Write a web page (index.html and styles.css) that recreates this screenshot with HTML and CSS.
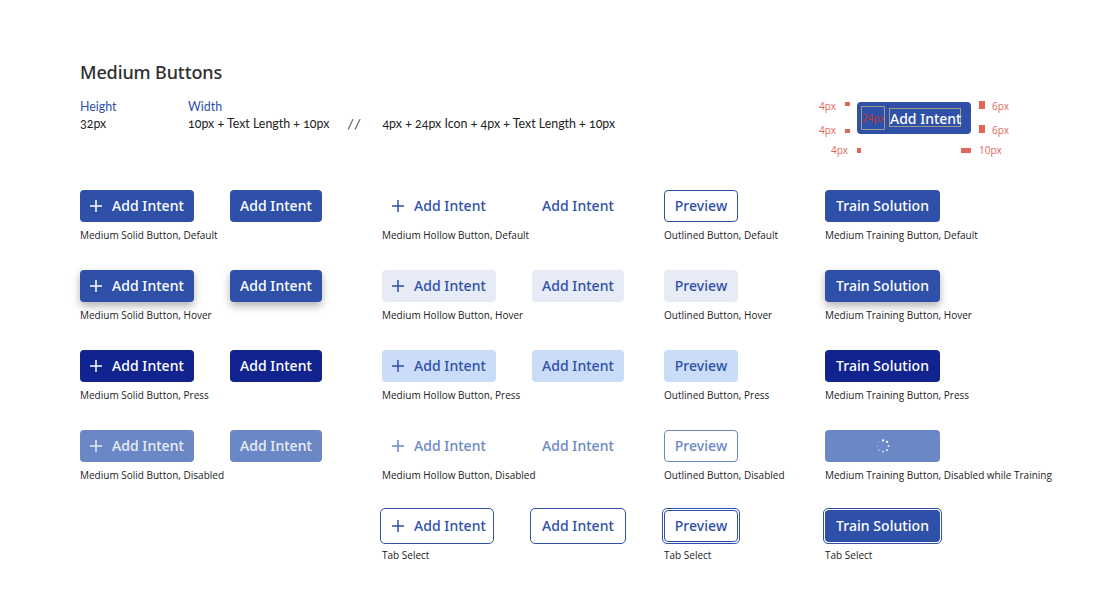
FILE: index.html
```html
<!DOCTYPE html>
<html lang="en">
<head>
<meta charset="utf-8">
<title>Medium Buttons</title>
<link rel="stylesheet" href="styles.css">
</head>
<body>
<svg class="defs" width="0" height="0" aria-hidden="true"><symbol id="plus" viewBox="0 0 24 24"><path d="M12 6v12M6 12h12" fill="none" stroke="currentColor" stroke-width="1.5"/></symbol></svg>
<main class="page">
  <h1 class="title">Medium Buttons</h1>
  <section class="spec">
    <div class="spec-col spec-height"><div class="spec-label">Height</div><div class="spec-value">32px</div></div>
    <div class="spec-col spec-width"><div class="spec-label">Width</div>
      <div class="spec-value spec-line"><span>10px + Text Length + 10px</span><span class="slashes">//</span><span>4px + 24px Icon + 4px + Text Length + 10px</span></div>
    </div>
    <div class="anatomy">
      <span class="note n1">4px</span><i class="mark m1"></i>
      <span class="note n2">4px</span><i class="mark m2"></i>
      <span class="note n3">4px</span><i class="mark m3"></i>
      <div class="anatomy-btn"><span class="box box-icon">24px</span><span class="box box-text">Add Intent</span></div>
      <i class="mark m4"></i><span class="note n4">6px</span>
      <i class="mark m5"></i><span class="note n5">6px</span>
      <i class="mark m6"></i><span class="note n6">10px</span>
    </div>
  </section>
  <section class="grid">
    <div class="cell"><a class="btn solid icon"><svg class="plus"><use href="#plus"/></svg>Add Intent</a><p class="cap">Medium Solid Button, Default</p></div>
    <div class="cell"><a class="btn solid">Add Intent</a></div>
    <div class="cell"><a class="btn hollow icon"><svg class="plus"><use href="#plus"/></svg>Add Intent</a><p class="cap">Medium Hollow Button, Default</p></div>
    <div class="cell"><a class="btn hollow">Add Intent</a></div>
    <div class="cell"><a class="btn outlined preview">Preview</a><p class="cap">Outlined Button, Default</p></div>
    <div class="cell"><a class="btn solid train">Train Solution</a><p class="cap">Medium Training Button, Default</p></div>

    <div class="cell"><a class="btn solid raised icon"><svg class="plus"><use href="#plus"/></svg>Add Intent</a><p class="cap">Medium Solid Button, Hover</p></div>
    <div class="cell"><a class="btn solid raised">Add Intent</a></div>
    <div class="cell"><a class="btn hollow hover icon"><svg class="plus"><use href="#plus"/></svg>Add Intent</a><p class="cap">Medium Hollow Button, Hover</p></div>
    <div class="cell"><a class="btn hollow hover">Add Intent</a></div>
    <div class="cell"><a class="btn hollow hover preview">Preview</a><p class="cap">Outlined Button, Hover</p></div>
    <div class="cell"><a class="btn solid raised train">Train Solution</a><p class="cap">Medium Training Button, Hover</p></div>

    <div class="cell"><a class="btn press icon"><svg class="plus"><use href="#plus"/></svg>Add Intent</a><p class="cap">Medium Solid Button, Press</p></div>
    <div class="cell"><a class="btn press">Add Intent</a></div>
    <div class="cell"><a class="btn hollow pressed icon"><svg class="plus"><use href="#plus"/></svg>Add Intent</a><p class="cap">Medium Hollow Button, Press</p></div>
    <div class="cell"><a class="btn hollow pressed">Add Intent</a></div>
    <div class="cell"><a class="btn hollow pressed preview">Preview</a><p class="cap">Outlined Button, Press</p></div>
    <div class="cell"><a class="btn press train">Train Solution</a><p class="cap">Medium Training Button, Press</p></div>

    <div class="cell"><a class="btn solid-off icon"><svg class="plus"><use href="#plus"/></svg>Add Intent</a><p class="cap">Medium Solid Button, Disabled</p></div>
    <div class="cell"><a class="btn solid-off">Add Intent</a></div>
    <div class="cell"><a class="btn hollow-off icon"><svg class="plus"><use href="#plus"/></svg>Add Intent</a><p class="cap">Medium Hollow Button, Disabled</p></div>
    <div class="cell"><a class="btn hollow-off">Add Intent</a></div>
    <div class="cell"><a class="btn outlined-off preview">Preview</a><p class="cap">Outlined Button, Disabled</p></div>
    <div class="cell"><a class="btn solid-off train"><svg class="spinner" viewBox="0 0 16 16"><circle cx="8" cy="1.6" r="1.3" fill="#fff"/><circle cx="12.6" cy="3.4" r="1.3" fill="#fff" opacity=".95"/><circle cx="14.3" cy="8" r="1.2" fill="#fff" opacity=".85"/><circle cx="12.6" cy="12.6" r="1.3" fill="#fff" opacity=".8"/><circle cx="8" cy="14.4" r="1.3" fill="#fff" opacity=".6"/><circle cx="3.4" cy="12.6" r="1.2" fill="#fff" opacity=".4"/><circle cx="1.7" cy="8" r="1.1" fill="#fff" opacity=".25"/><circle cx="3.4" cy="3.4" r="1.1" fill="#fff" opacity=".15"/></svg></a><p class="cap">Medium Training Button, Disabled while Training</p></div>

    <div class="cell"></div>
    <div class="cell"></div>
    <div class="cell"><a class="btn hollow ring icon"><svg class="plus"><use href="#plus"/></svg>Add Intent</a><p class="cap">Tab Select</p></div>
    <div class="cell"><a class="btn hollow ring">Add Intent</a></div>
    <div class="cell"><a class="btn outlined preview ring">Preview</a><p class="cap">Tab Select</p></div>
    <div class="cell"><a class="btn solid train ring">Train Solution</a><p class="cap">Tab Select</p></div>
  </section>
</main>
</body>
</html>
```
FILE: styles.css
```css
* { box-sizing: border-box; }
html, body { margin: 0; background: #fff; }
body { font-family: "Open Sans", "Noto Sans", sans-serif; color: #2b2b2b; }
.defs { position: absolute; }
.page { width: 1100px; height: 612px; padding: 60px 0 0 80px; overflow: hidden; }
.title { margin: 0; font-family: "Noto Sans", sans-serif; font-size: 18px; line-height: 25px; font-weight: 500; color: #2e2e2e; letter-spacing: -.12px; }

.spec { display: flex; height: 62px; margin-top: 12px; position: relative; font-family: "Lato", sans-serif; font-size: 12.4px; line-height: 18px; }
.spec-height { width: 108px; padding-top: 1px; }
.spec-width { width: 600px; padding-top: 1px; }
.spec-label { color: #2e50a8; line-height: 17px; }
.spec-value { color: #222; font-feature-settings: "onum"; }
.spec-line { display: flex; white-space: nowrap; }
.slashes { width: 53px; text-align: center; font-style: italic; font-size: 13px; letter-spacing: 4px; }

.anatomy { position: absolute; left: 0; top: 3px; width: 1000px; height: 70px; font-family: "Open Sans", sans-serif; }
.note { position: absolute; font-size: 10px; line-height: 14px; color: #e0665a; }
.mark { position: absolute; background: #e0665a; }
.n1 { left: 739px; top: -1px; }
.n2 { left: 739px; top: 23px; }
.n3 { left: 751px; top: 43px; }
.n4 { left: 912px; top: -1px; }
.n5 { left: 912px; top: 23px; }
.n6 { left: 899px; top: 43px; }
.m1 { left: 765px; top: 2px; width: 5px; height: 4px; }
.m2 { left: 765px; top: 29px; width: 5px; height: 4px; }
.m3 { left: 777px; top: 48px; width: 4px; height: 5px; }
.m4 { left: 899px; top: 1px; width: 6px; height: 8px; }
.m5 { left: 899px; top: 25px; width: 6px; height: 8px; }
.m6 { left: 881px; top: 48px; width: 10px; height: 5px; }
.anatomy-btn { position: absolute; left: 777px; top: 2px; width: 114px; height: 32px; border-radius: 4px; background: #2e50a8; }
.box { position: absolute; border: 1px solid #a09a8c; }
.box-icon { left: 4px; top: 4px; width: 24px; height: 24px; font-size: 10px; line-height: 22px; color: #c0392b; white-space: nowrap; }
.box-text { left: 32px; top: 6px; width: 72px; height: 19px; font-family: "Noto Sans", sans-serif; font-size: 14px; font-weight: 500; line-height: 20px; color: #fff; white-space: nowrap; }

.grid { display: grid; grid-template-columns: 150px 152px 150px 132px 161px 230px; grid-auto-rows: 80px; margin-top: 31px; }
.cell { min-width: 0; }
.btn { display: inline-flex; align-items: center; height: 32px; width: 92px; padding: 0 10px; border-radius: 4px; font-family: "Noto Sans", sans-serif; font-size: 14px; font-weight: 500; letter-spacing: .05px; line-height: 20px; white-space: nowrap; vertical-align: top; position: relative; }
.btn.icon { width: 114px; padding: 0 10px 0 4px; }
.btn.preview { width: 74px; justify-content: center; padding: 0; }
.btn.train { width: 115px; justify-content: center; padding: 0; }
.plus { width: 24px; height: 24px; margin-right: 4px; }
.cap { margin: 6px 0 0; font-size: 10px; line-height: 14px; color: #222; white-space: nowrap; }

.solid { background: #2e50a8; color: #fff; }
.raised { box-shadow: 0 4px 8px rgba(0, 0, 0, .3); }
.press { background: #10238f; color: #fff; }
.solid-off { background: #6c87c5; color: #e9edf7; }
.spinner { width: 14px; height: 14px; }
.hollow { color: #2e50a8; }
.hover { background: #e6ebf6; }
.pressed { background: #cbdcf8; }
.hollow-off { color: #6c87c5; }
.outlined { border: 1px solid #2e50a8; color: #2e50a8; }
.outlined-off { border: 1px solid #6c87c5; color: #6c87c5; }
.ring::after { content: ""; position: absolute; inset: -2px; border: 1px solid #2e50a8; border-radius: 5px; }
.icon.ring::after { right: 2px; }
.outlined.ring::after { inset: -3px; }
```
